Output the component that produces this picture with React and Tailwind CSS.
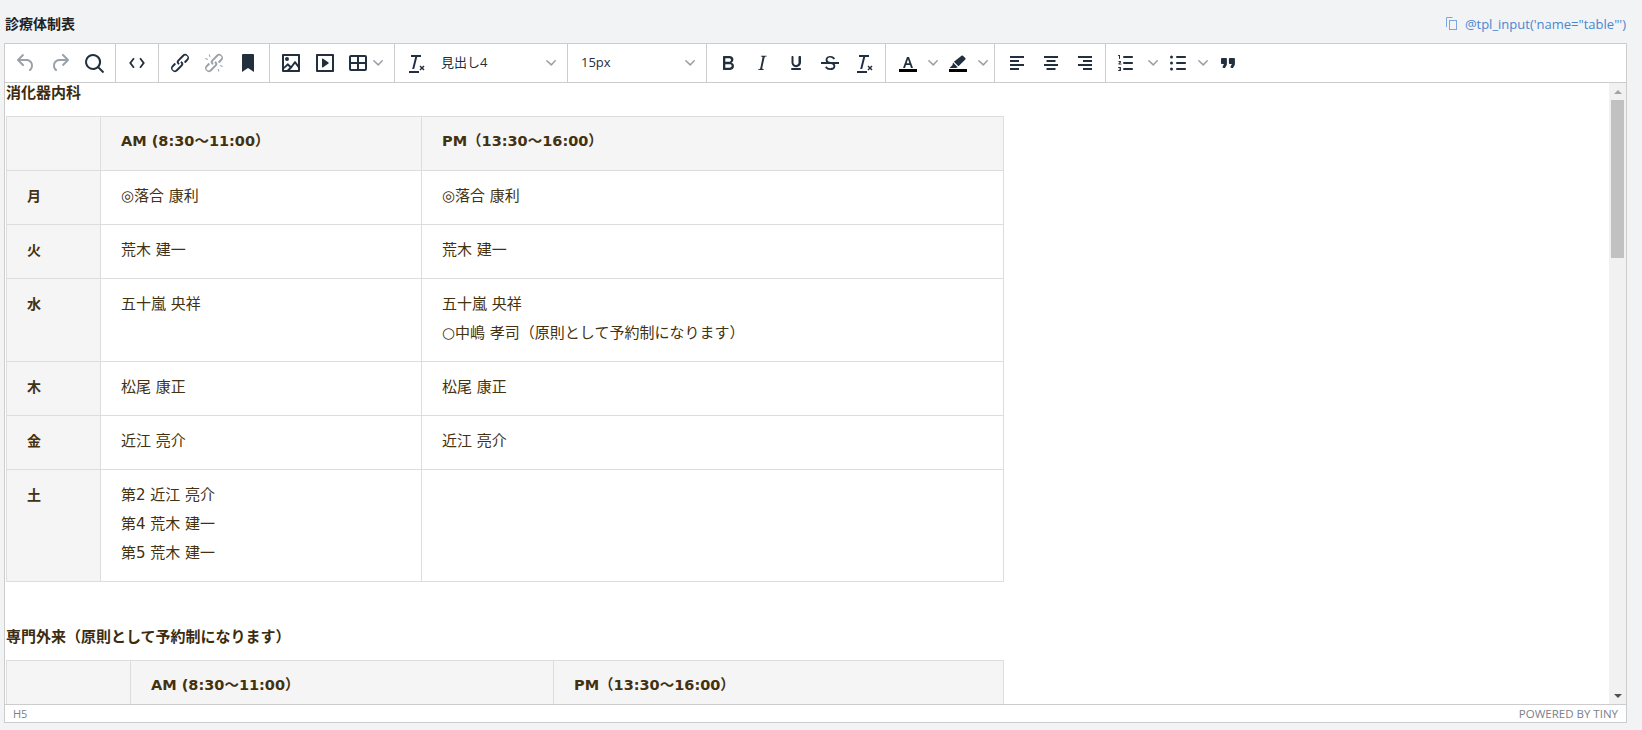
const ink = "#222f3e";
const grey = "#9aa1a9";

const Ico = ({ children, off }) => (
  <svg width="24" height="24" viewBox="0 0 24 24" fill={off ? grey : ink} className="block shrink-0">
    {children}
  </svg>
);

const Chev = () => (
  <svg width="10" height="10" viewBox="0 0 10 10" fill={grey} className="block shrink-0">
    <path d="M8.7 2.2c.3-.3.8-.3 1 0 .4.2.4.7 0 1L5.8 7.4a.8.8 0 0 1-1.1 0L.3 3.2a.7.7 0 0 1 0-1 .8.8 0 0 1 1.1 0l3.9 3.6 3.4-3.6z" />
  </svg>
);

const Btn = ({ children }) => (
  <div className="w-[34px] h-[34px] flex items-center justify-center shrink-0">{children}</div>
);

const Sep = ({ children, w }) => (
  <div className={`flex items-center h-full border-r border-[#cccccc] shrink-0 ${w}`}>{children}</div>
);

const Select = ({ label, w, pl, text }) => (
  <div className={`h-[34px] flex items-center justify-between pr-[11px] ${w} ${pl}`}>
    <span className={`text-[#222f3e] ${text}`}>{label}</span>
    <Chev />
  </div>
);

const RemoveFormat = () => (
  <Ico>
    <path d="M13.2 6l-3 12h-2l3-12H7V4h10v2h-3.8zM5 20h10v2H5v-2zm11.5-5.6l1.5 1.5 1.5-1.5 1 1-1.5 1.5 1.5 1.5-1 1-1.5-1.5-1.5 1.5-1-1 1.5-1.5-1.5-1.5 1-1z" />
  </Ico>
);

const linkPath = "M6.2 12.3a1 1 0 0 1 1.4 1.4l-2 2a2 2 0 1 0 2.6 2.8l4.8-4.8a1 1 0 0 0 0-1.4 1 1 0 1 1 1.4-1.3 2.9 2.9 0 0 1 0 4L9.6 20a3.9 3.9 0 0 1-5.5-5.5l2-2.2zm11.6-.6a1 1 0 0 1-1.4-1.4l2-2a2 2 0 1 0-2.6-2.8l-4.8 4.8a1 1 0 0 0 0 1.4 1 1 0 1 1-1.4 1.3 2.9 2.9 0 0 1 0-4L14.4 4a3.9 3.9 0 0 1 5.5 5.5l-2 2.2z";

const cell = "border border-[#dddddd] text-left align-top px-[20px] leading-[29px]";
const headTh = `${cell} bg-[#f5f5f5] font-bold text-[14.5px] pt-[10px] pb-[14px]`;
const dayTh = `${cell} bg-[#f5f5f5] font-bold text-[14px] pt-[11px] pb-[13px]`;
const td = `${cell} text-[15px] pt-[11px] pb-[13px]`;
const h4 = "text-[15px] leading-[20px] font-bold text-[#3d2b10] mb-[13px]";

const rows = [
  ["月", ["◎落合 康利"], ["◎落合 康利"]],
  ["火", ["荒木 建一"], ["荒木 建一"]],
  ["水", ["五十嵐 央祥"], ["五十嵐 央祥", "○中嶋 孝司（原則として予約制になります）"]],
  ["木", ["松尾 康正"], ["松尾 康正"]],
  ["金", ["近江 亮介"], ["近江 亮介"]],
  ["土", ["第2 近江 亮介", "第4 荒木 建一", "第5 荒木 建一"], []],
];

const Lines = ({ items }) => items.map((t) => <div key={t}>{t}</div>);

const HeadRow = () => (
  <tr>
    <th className={headTh}></th>
    <th className={headTh}>AM (8:30～11:00）</th>
    <th className={headTh}>PM（13:30～16:00）</th>
  </tr>
);

const App = () => {
  return (
    <div className="w-[1642px] h-[730px] bg-[#f2f3f5] overflow-hidden pl-[4px] pr-[15px] font-['Open_Sans','Noto_Sans_CJK_JP',sans-serif]">
      <div className="h-[43px] flex justify-between pt-[14px] leading-[20px]">
        <div className="font-bold text-[14px] text-[#222222] pl-[1px]">診療体制表</div>
        <div className="flex items-start gap-[8px] text-[#4a86d0] text-[13px] pr-[1px]">
          <svg width="11" height="13" viewBox="0 0 11 13" fill="none" stroke="#7da7dc" className="mt-[3px] block">
            <rect x="3.5" y="3.5" width="7" height="9" />
            <path d="M.5 10V.5h6" />
          </svg>
          <span>@tpl_input('name="table"')</span>
        </div>
      </div>

      <div className="border border-[#cccccc] bg-white">
        {/* toolbar */}
        <div className="h-[39px] flex items-center border-b border-[#cccccc]">
          <Sep w="w-[111px] pl-[4px]">
            <Btn>
              <Ico off><path d="M6.4 8H12c3.7 0 6.2 2 6.8 5.1.6 2.7-.4 5.6-2.3 6.8a1 1 0 0 1-1-1.8c1.1-.7 1.8-2.7 1.4-4.6-.5-2.1-2.1-3.5-4.9-3.5H6.4l3.3 3.3a1 1 0 1 1-1.4 1.4l-5-5a1 1 0 0 1 0-1.4l5-5a1 1 0 0 1 1.4 1.4L6.4 8z" /></Ico>
            </Btn>
            <Btn>
              <Ico off><path d="M17.6 10H12c-2.8 0-4.4 1.4-4.9 3.5-.4 2 .3 3.9 1.4 4.6a1 1 0 0 1-1 1.8c-2-1.2-2.9-4.1-2.3-6.8.6-3 3.1-5.1 6.8-5.1h5.6l-3.3-3.3a1 1 0 1 1 1.4-1.4l5 5a1 1 0 0 1 0 1.4l-5 5a1 1 0 0 1-1.4-1.4l3.3-3.3z" /></Ico>
            </Btn>
            <Btn>
              <Ico><path d="M16 17.3a8 8 0 1 1 1.4-1.4l4.3 4.4a1 1 0 0 1-1.4 1.4l-4.4-4.4zm-5-.3a6 6 0 1 0 0-12 6 6 0 0 0 0 12z" /></Ico>
            </Btn>
          </Sep>
          <Sep w="w-[43px] pl-[4px]">
            <Btn>
              <Ico><path d="M9.4 7.4L5.8 12l3.6 4.6-1.6 1.2L3.3 12l4.5-5.8 1.6 1.2zm5.2 0l1.6-1.2L20.7 12l-4.5 5.8-1.6-1.2 3.6-4.6-3.6-4.6z" transform="translate(12 12) scale(.9) translate(-12 -12)" /></Ico>
            </Btn>
          </Sep>
          <Sep w="w-[111px] pl-[4px]">
            <Btn><Ico><path d={linkPath} /></Ico></Btn>
            <Btn>
              <Ico off><path d={linkPath + "M7.6 3.3l.9 2.5-.9.4-.9-2.5.9-.4zM3.6 7l2.4 1-.4.9-2.4-1 .4-.9zm16.8 9l-2.4-1 .4-.9 2.4 1-.4.9zm-3.9 4.7l-.9-2.5.9-.4.9 2.5-.9.4z"} /></Ico>
            </Btn>
            <Btn><Ico><path d="M6 4v17l6-4 6 4V4a1 1 0 0 0-1-1H7a1 1 0 0 0-1 1z" /></Ico></Btn>
          </Sep>
          <Sep w="w-[125px] pl-[4px]">
            <Btn>
              <Ico><path d="M5 15.7l3.3-3.2c.3-.3.7-.3 1 0L12 15l3.3-4.4c.4-.5 1-.5 1.4 0l2.3 3V5H5v10.7zM5 18v1h3l2.5-2.5-1.7-1.7L5 18zm14-1.3l-3-4-3.5 4.7-1.6 1.6h8.1v-2.3zM4 3h16c.6 0 1 .4 1 1v16c0 .6-.4 1-1 1H4a1 1 0 0 1-1-1V4c0-.6.4-1 1-1zm4 7a2 2 0 1 1 0-4 2 2 0 0 1 0 4z" /></Ico>
            </Btn>
            <Btn>
              <Ico><path d="M4 3h16c.6 0 1 .4 1 1v16c0 .6-.4 1-1 1H4a1 1 0 0 1-1-1V4c0-.6.4-1 1-1zm1 2v14h14V5H5zm4.8 2.6l5.7 4a.5.5 0 0 1 0 .8l-5.7 4a.5.5 0 0 1-.8-.4V8c0-.4.5-.6.8-.4z" /></Ico>
            </Btn>
            <div className="flex items-center gap-[3px] pl-[4px]">
              <Ico><path d="M19 4a2 2 0 0 1 2 2v12a2 2 0 0 1-2 2H5a2 2 0 0 1-2-2V6c0-1.1.9-2 2-2h14zm-8 9H5v5h6v-5zm8 0h-6v5h6v-5zm0-7h-6v5h6V6zm-8 0H5v5h6V6z" /></Ico>
              <Chev />
            </div>
          </Sep>
          <Sep w="w-[173px] pl-[4px]">
            <Btn><RemoveFormat /></Btn>
            <Select label="見出し4" w="w-[135px]" pl="pl-[8px]" text="text-[13px]" />
          </Sep>
          <Sep w="w-[139px]">
            <Select label="15px" w="w-[138px]" pl="pl-[13px]" text="text-[13px]" />
          </Sep>
          <Sep w="w-[179px] pl-[4px]">
            <Btn><Ico><path d="M7.8 19c-.3 0-.5 0-.6-.2l-.2-.5V5.7c0-.2 0-.4.2-.5l.6-.2h5c1.5 0 2.7.3 3.5 1 .7.6 1.1 1.4 1.1 2.5a3 3 0 0 1-.6 1.9c-.4.6-1 1-1.6 1.2.4.1.9.3 1.3.6s.8.7 1 1.1c.3.5.4 1 .4 1.6 0 1.3-.4 2.3-1.3 3-.8.7-2.1 1.1-3.8 1.1H7.8zm5-8.3c.6 0 1.2-.1 1.6-.5.4-.3.6-.7.6-1.3 0-1.1-.8-1.7-2.3-1.7H9.3v3.5h3.4zm.5 6c.7 0 1.3-.1 1.7-.4.4-.3.6-.7.6-1.4 0-.6-.2-1-.6-1.3-.4-.3-1-.4-1.7-.4H9.3v3.5h4z" /></Ico></Btn>
            <Btn><Ico><path d="M16.7 4.7l-.1.9h-.3c-.6 0-1 0-1.4.3-.3.3-.4.6-.5 1.1l-2.1 9.8v.6c0 .5.4.8 1.4.8h.2l-.2.8H8l.2-.8h.2c1.1 0 1.8-.5 2-1.5l2-9.8.1-.5c0-.6-.4-.8-1.4-.8h-.3l.2-.9h5.8z" /></Ico></Btn>
            <Btn><Ico><path d="M16 5c.6 0 1 .4 1 1v5.5a4 4 0 0 1-.4 1.8l-1 1.4a5.3 5.3 0 0 1-5.5 1 4 4 0 0 1-2.2-2.4c-.2-.5-.4-1.2-.4-1.8V6c0-.6.4-1 1-1s1 .4 1 1v5.5c0 .3 0 .6.2 1 .2.3.5.7.8 1 .5.4 1 .5 1.5.5.4 0 .7 0 1-.2a3 3 0 0 0 1-.8c.2-.3.5-.6.5-1V6c0-.6.4-1 1-1zM8 17h8c.6 0 1 .4 1 1s-.4 1-1 1H8a1 1 0 0 1 0-2z" /></Ico></Btn>
            <Btn><Ico><path d="M15.6 8.5c-.5-.7-1-1.1-1.3-1.3-.6-.4-1.3-.6-2-.6-2.7 0-2.8 1.7-2.8 2.1 0 1.6 1.8 2 3.2 2.3 4.4.9 4.6 2.8 4.6 3.9 0 1.4-.7 4.1-5 4.1A6.2 6.2 0 0 1 7 16.4l1.5-1.1c.4.6 1.6 2 3.7 2 1.6 0 2.5-.4 3-1.2.4-.8.3-2-.8-2.6-.7-.4-1.6-.7-2.9-1-1-.2-3.9-.8-3.9-3.6C7.6 6 10.3 5 12.4 5c2.9 0 4.2 1.6 4.7 2.4l-1.5 1.1zM3 11h18v2H3z" /></Ico></Btn>
            <Btn><RemoveFormat /></Btn>
          </Sep>
          <Sep w="w-[109px] pl-[10px] gap-[8px]">
            <div className="flex items-center gap-[8px]">
              <Ico><path d="M3 18h18v3H3z" fill="#000" /><path d="M7 17l4-11h2l4 11h-2l-1-3H10l-1 3H7zm3.6-4.7h2.8L12 8.3l-1.4 4z" /></Ico>
              <Chev />
            </div>
            <div className="flex items-center gap-[8px]">
              <Ico><path d="M3 18h18v3H3z" fill="#000" /><path d="M15.5 4.7c.4-.4 1-.4 1.4 0l2.4 2.4c.4.4.4 1 0 1.4l-6.8 6.8-4.6-4.6 7.6-6zM7 11.5l4.8 4.8-2 .7H3.5l3-3 .5-2.5z" /></Ico>
              <Chev />
            </div>
          </Sep>
          <Sep w="w-[111px] pl-[5px]">
            <Btn><Ico><path d="M5 5h14v2H5zM5 9h9v2H5zM5 13h14v2H5zM5 17h9v2H5z" /></Ico></Btn>
            <Btn><Ico><path d="M5 5h14v2H5zM7.5 9h9v2h-9zM5 13h14v2H5zM7.5 17h9v2h-9z" /></Ico></Btn>
            <Btn><Ico><path d="M5 5h14v2H5zM10 9h9v2h-9zM5 13h14v2H5zM10 17h9v2h-9z" /></Ico></Btn>
          </Sep>
          <div className="flex items-center h-full pl-[8px]">
            <div className="flex items-center gap-[10px]">
              <Ico><path d="M10 17h8c.6 0 1 .4 1 1s-.4 1-1 1h-8a1 1 0 0 1 0-2zm0-6h8c.6 0 1 .4 1 1s-.4 1-1 1h-8a1 1 0 0 1 0-2zm0-6h8c.6 0 1 .4 1 1s-.4 1-1 1h-8a1 1 0 1 1 0-2zM6 4v3.5c0 .3-.2.5-.5.5a.5.5 0 0 1-.5-.5V5h-.5a.5.5 0 0 1 0-1H6zM5 10h1.5c.3 0 .5.2.5.5v.9l-1.6 1.1H7a.5.5 0 0 1 0 1H4.5v-1.2L6 11H4.7a.5.5 0 0 1 .3-1zM4.5 16h2c.3 0 .5.2.5.5v3c0 .3-.2.5-.5.5h-2a.5.5 0 0 1 0-1H6v-.5H5v-1h1V17H4.5a.5.5 0 0 1 0-1z" /></Ico>
              <Chev />
            </div>
            <div className="flex items-center gap-[8px] pl-[8px]">
              <Ico><path d="M11 5h8c.6 0 1 .4 1 1s-.4 1-1 1h-8a1 1 0 0 1 0-2zm0 6h8c.6 0 1 .4 1 1s-.4 1-1 1h-8a1 1 0 0 1 0-2zm0 6h8c.6 0 1 .4 1 1s-.4 1-1 1h-8a1 1 0 0 1 0-2zM5.5 4.5a1.5 1.5 0 1 1 0 3 1.5 1.5 0 0 1 0-3zm0 6a1.5 1.5 0 1 1 0 3 1.5 1.5 0 0 1 0-3zm0 6a1.5 1.5 0 1 1 0 3 1.5 1.5 0 0 1 0-3z" /></Ico>
              <Chev />
            </div>
            <div className="pl-[8px]">
              <Ico><path d="M7.5 17h.9c.4 0 .7-.2.9-.6L10.7 14c.1-.2.2-.5.2-.8V8c0-.6-.4-1-1-1H6a1 1 0 0 0-1 1v4c0 .6.4 1 1 1h2l-1.3 2.6a1 1 0 0 0 .8 1.4zm8 0h.9c.4 0 .7-.2.9-.6l1.4-2.4c.1-.2.2-.5.2-.8V8c0-.6-.4-1-1-1h-4a1 1 0 0 0-1 1v4c0 .6.4 1 1 1h2l-1.3 2.6a1 1 0 0 0 .8 1.4z" /></Ico>
            </div>
          </div>
        </div>

        {/* editor */}
        <div className="h-[621px] flex overflow-hidden">
          <div className="flex-1 overflow-hidden pl-[1px] text-[#43310f] font-['DejaVu_Sans','Noto_Sans_CJK_JP',sans-serif]">
            <h4 className={h4}>消化器内科</h4>
            <table className="w-[998px] border-collapse table-fixed">
              <colgroup>
                <col className="w-[94px]" />
                <col className="w-[321px]" />
                <col />
              </colgroup>
              <tbody>
                <HeadRow />
                {rows.map(([day, am, pm]) => (
                  <tr key={day}>
                    <th className={dayTh}>{day}</th>
                    <td className={td}><Lines items={am} /></td>
                    <td className={td}><Lines items={pm} /></td>
                  </tr>
                ))}
              </tbody>
            </table>
            <h4 className={`${h4} mt-[45px]`}>専門外来（原則として予約制になります）</h4>
            <table className="w-[998px] border-collapse table-fixed">
              <colgroup>
                <col className="w-[124px]" />
                <col className="w-[423px]" />
                <col />
              </colgroup>
              <tbody>
                <HeadRow />
              </tbody>
            </table>
          </div>
          {/* scrollbar */}
          <div className="w-[17px] bg-[#f1f1f1] flex flex-col items-center">
            <div className="h-[17px] flex items-center justify-center">
              <div className="w-0 h-0 border-x-[4px] border-x-transparent border-b-[4px] border-b-[#a3a3a3]" />
            </div>
            <div className="w-[13px] h-[158px] bg-[#c1c1c1]" />
            <div className="flex-1" />
            <div className="h-[17px] flex items-center justify-center">
              <div className="w-0 h-0 border-x-[4px] border-x-transparent border-t-[4px] border-t-[#505050]" />
            </div>
          </div>
        </div>

        {/* status bar */}
        <div className="h-[18px] border-t border-[#cccccc] flex items-center justify-between px-[8px] text-[#7a818a] leading-none">
          <span className="text-[11px]">H5</span>
          <span className="text-[11.5px]">POWERED BY TINY</span>
        </div>
      </div>
    </div>
  );
};

export default App;
